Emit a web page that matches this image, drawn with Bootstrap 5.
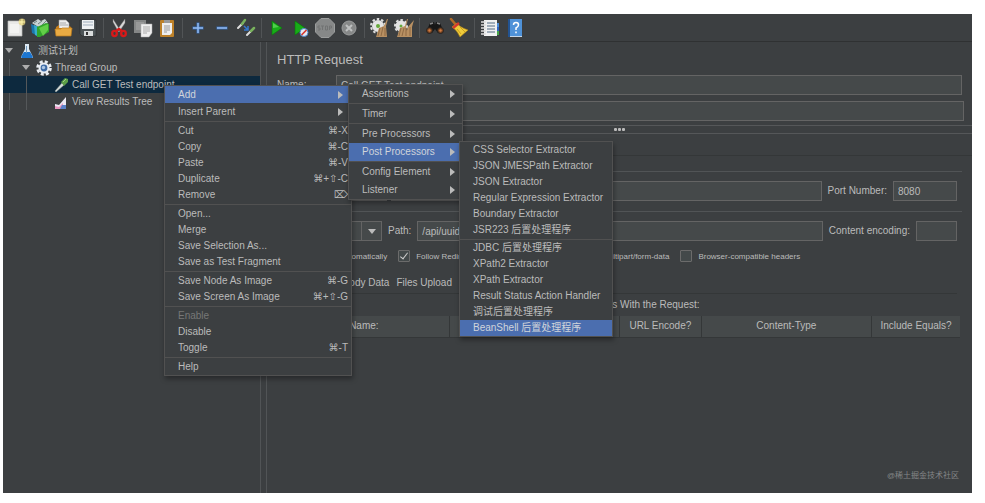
<!DOCTYPE html>
<html lang="zh-CN">
<head>
<meta charset="utf-8">
<meta name="viewport" content="width=device-width, initial-scale=1">
<title>Apache JMeter</title>
<link href="https://cdn.jsdelivr.net/npm/bootstrap@5.3.0/dist/css/bootstrap.min.css" rel="stylesheet">
<style>
body{background:#fff;color:#bbb;font:10px/16px "Liberation Sans","Noto Sans CJK SC","DejaVu Sans",sans-serif}
.jm-window{background:#3c3f41;margin:14px 13px 10px 3px;min-height:calc(100vh - 24px)}
.jm-toolbar{height:28px;padding-left:1px;border-bottom:1px solid #2f3132}
.tool{width:24px;height:26px;padding:0;border:0;background:none;display:flex;align-items:center;justify-content:center}
.tool svg{width:20px;height:20px;display:block}
.tool-sep{width:7px;height:20px;background:linear-gradient(#515456,#515456) center/1px 100% no-repeat}
.jm-tree{width:258px;border-right:1px solid #515456}
.tree-row{height:17px;line-height:17px;white-space:nowrap}
.tree-row svg{width:16px;height:16px;flex:none}
.tree-row span{margin-left:3px}
.caret-open{width:12px;flex:none;display:flex;justify-content:center}
.caret-open::before{content:"";border:4px solid transparent;border-top:5px solid #adadad;border-bottom:0}
.lvl2{padding-left:17px}
.lvl3{padding-left:50px}
.guides{background:linear-gradient(#55585a,#55585a) 6px 0/1px 100% no-repeat}
.guides .lvl3{background:linear-gradient(#55585a,#55585a) 23px 0/1px 100% no-repeat}
.guides .picked{background-color:#0d293e}
.split-bar{width:6px;border-right:1px solid #515456}
.panel-title{font-size:13px;line-height:16px;padding:10px 10px 0;margin:0 0 7px}
.side{padding-left:10px;margin-right:10px}
.side-second{margin:6px 8px 0 0}
.lab{width:59px}
.field{height:20px;min-width:0;background:#45494a;border:1px solid #646464;color:#bbb;padding:0 4px;font-size:10px;line-height:16px;border-radius:0}
.w-proto{width:64px}.w-port{width:64px}.w-enc{width:41px}
.split-h{height:9px;border-top:1px solid #555759;border-bottom:1px solid #555759;gap:1px}
.split-h i{width:3px;height:3px;background:#bbb;border-radius:1px}
.tabs-top{height:22px;padding-left:10px;border-bottom:1px solid #343738}
.tab-link{border:0;background:none;color:#bbb;padding:0;line-height:16px}
.group{margin:0 10px 0 9px;padding:9px 5px 0 0;border-top:1px solid #515456}
.group-gap{padding-bottom:10px}
.field-label{margin:0 6px}
.group-name{height:15px;line-height:15px;padding-left:9px}
.method{width:82px;appearance:none;background:#45494a linear-gradient(#646464,#646464) right 19px top/1px 100% no-repeat}
.method-wrap{position:relative}
.method-wrap::after{content:"";position:absolute;right:6px;top:8px;border:4px solid transparent;border-top:5px solid #bbb;border-bottom:0;pointer-events:none}
.opts{height:13px;margin-top:9px;padding-left:14px;font-size:8px;line-height:13px;gap:11px;white-space:nowrap}
.opts label{display:flex;gap:6px}
.tick{appearance:none;width:12px;height:12px;margin:0;background:#43494a;border:1px solid #6b6b6b;border-radius:1px;display:grid;place-items:center}
.tick:checked::before{content:"";width:4px;height:8px;margin-top:-2px;border:solid #ccc;border-width:0 1px 1px 0;transform:rotate(38deg)}
.tabs-sub{height:21px;margin:10px 0 0;border-bottom:1px solid #343738;gap:7px;padding-left:8px}
.args-title{height:22px;line-height:21px}
.args{width:calc(100% - 24px);margin-left:12px;table-layout:fixed;border-collapse:collapse}
.args th{height:21px;background:#45494a;border-right:1px solid #343738;border-bottom:1px solid #343738;font-weight:400;text-align:center;padding:0}
.args th:last-child{border-right:0}
.c-wide{width:25%}.c-url{width:12%}.c-inc{width:13%}
.popup{position:absolute;background:#3c3f41;border:1px solid #515151;box-shadow:1px 3px 5px rgba(0,0,0,.35)}
.popup button{display:flex;align-items:center;width:100%;height:16px;border:0;background:none;color:#bbb;padding:0 3px 0 13px;text-align:left;line-height:16px;white-space:nowrap}
.popup kbd{margin-left:auto;padding:0;background:none;color:#bbb;font:10px/16px "Liberation Sans","DejaVu Sans",sans-serif}
.popup hr{margin:1px 0;border:0;border-top:1px solid #515151;opacity:1}
.popup .chosen{background:#4b6eaf;color:#d0d4da}
.popup .more::after{content:"";margin-left:auto;margin-right:4px;border:4px solid transparent;border-left:5px solid #bbb;border-right:0}
.popup :disabled{color:#777}
.pop-context{left:161px;top:71px;width:188px}
.pop-context .more{height:17px}
.pop-context .more::after{margin-right:5px}
.pop-add{left:345px;top:70px;width:115px}
.pop-add button{height:18px}
.pop-add hr{margin:0 0 1px}
.pop-post{left:456px;top:127px;width:154px}
.pop-post hr{margin:1px 0 0}
.credit{position:absolute;right:13px;bottom:9px;font-size:8px;color:#858788}
</style>
<script src="https://cdn.jsdelivr.net/npm/bootstrap@5.3.0/dist/js/bootstrap.bundle.min.js"></script>
</head>
<body>
<div class="jm-window position-relative d-flex flex-column">
 <div class="jm-toolbar d-flex align-items-center" role="toolbar" aria-label="Toolbar">
  <button class="tool" aria-label="New"><svg viewBox="0 0 20 20"><path d="M2 3h14v15H2z" fill="#e9e9e7" stroke="#bcbcba" stroke-width=".7"/><path d="M4 6h9v9H4z" fill="#f3f3f1"/><circle cx="16" cy="4" r="3.4" fill="#e8d479" opacity=".75"/><path d="M16 1v6M13 4h6" stroke="#fff6ad"/></svg></button>
  <button class="tool" aria-label="Templates"><svg viewBox="0 0 20 20"><path d="M2 5l6-4 3 2 4-2 3 4-8 5z" fill="#c9d4d3"/><path d="M4 5l3-2m1 3 4-3m0 4 4-4" stroke="#71807f"/><path d="M1 6l5 2v9l-4-2z" fill="#1a77ad"/><path d="M4 7l5 2v10l-4-2z" fill="#39aecb"/><path d="M7 9l9-4 3 1v8l-9 5H7z" fill="#31a42b"/><path d="M9 10l9-4v6l-5 6z" fill="#62cf48"/></svg></button>
  <button class="tool" aria-label="Open"><svg viewBox="0 0 20 20"><path d="M5 2h7l3 3v7H5z" fill="#eee" stroke="#999" stroke-width=".6"/><path d="M6 5h6M6 7h8" stroke="#aaa"/><path d="M2 9l3-2v3h10V8l2 1v8H2z" fill="#c57d1c"/><path d="M1 11h6l1-1h10l-1 8H2z" fill="#eaab43" stroke="#bf7c1b" stroke-width=".7"/></svg></button>
  <button class="tool" aria-label="Save"><svg viewBox="0 0 20 20"><path d="M2 2h16v16H4l-2-2z" fill="#4e5558" stroke="#262a2c" stroke-width=".6"/><path d="M4 2h12v9H4z" fill="#eef1f3"/><path d="M5 4h10M5 7h10" stroke="#9faebd"/><path d="M6 13h9v5H6z" fill="#d9dcdd"/><path d="M8 14h2v3H8z" fill="#333"/></svg></button>
  <span class="tool-sep"></span>
  <button class="tool" aria-label="Cut"><svg viewBox="0 0 20 20"><path d="M4 1l7 11-2 1L4 4zM16 1L8 12l2 2 6-9z" fill="#d8d8d8" stroke="#777" stroke-width=".4"/><g fill="none" stroke="#d81919" stroke-width="2.3"><ellipse cx="5.5" cy="15.5" rx="2.3" ry="2.6"/><ellipse cx="14.5" cy="15.5" rx="2.3" ry="2.6"/><path d="M7 13l3-2 3 2"/></g></svg></button>
  <button class="tool" aria-label="Copy"><svg viewBox="0 0 20 20"><path d="M1 2h12v13H1z" fill="#858787"/><path d="M3 5h8M3 7h6M3 9h5M3 11h5" stroke="#aaa"/><path d="M8 6h11v9l-3 4H8z" fill="#eee" stroke="#aaa" stroke-width=".5"/><path d="M10 9h7M10 11h7M10 13h7M10 15h4" stroke="#aaa"/></svg></button>
  <button class="tool" aria-label="Paste"><svg viewBox="0 0 20 20"><rect x="3" y="2" width="14" height="17" rx="1" fill="#bd8129"/><path d="M5 5h10v10l-2 2H5z" fill="#eee"/><path d="M7 2h6v3H7z" fill="#999"/><path d="M7 8h6M7 10h6M7 12h6M7 14h3" stroke="#999"/></svg></button>
  <span class="tool-sep"></span>
  <button class="tool" aria-label="Expand All"><svg viewBox="0 0 20 20"><path d="M10 4.500v11M4.500 10h11" stroke="#3568ad" stroke-width="3"/><path d="M10 5v10M5 10h10" stroke="#94baf0" stroke-width="1.500"/></svg></button>
  <button class="tool" aria-label="Collapse All"><svg viewBox="0 0 20 20"><path d="M4.500 10h11" stroke="#3568ad" stroke-width="3"/><path d="M5 10h10" stroke="#94baf0" stroke-width="1.500"/></svg></button>
  <button class="tool" aria-label="Toggle"><svg viewBox="0 0 20 20"><g stroke-linecap="round"><path d="M2 10l5-5M11 17l4-4" stroke="#ddd" stroke-width="2"/><path d="M6 6l3-4M15 13l3-3" stroke="#79b25d" stroke-width="2.500"/></g><path d="M8 8l4 4m0-4v4H8" fill="none" stroke="#3478ce" stroke-width="1.500"/></svg></button>
  <span class="tool-sep"></span>
  <button class="tool" aria-label="Start"><svg viewBox="0 0 20 20"><path d="M5 3l10 7L5 17z" fill="#18ac18" stroke="#087808" stroke-width=".6"/><path d="M6 5l6 4-6 1z" fill="#50ce4d"/></svg></button>
  <button class="tool" aria-label="Start no pauses"><svg viewBox="0 0 20 20"><path d="M4 3l10 7-10 7z" fill="#18ac18" stroke="#087808" stroke-width=".6"/><circle cx="13" cy="14.500" r="4" fill="#e7e9f0" stroke="#4c86ce"/><path d="M10.500 17l5-5" stroke="#d43931" stroke-width="1.700"/></svg></button>
  <button class="tool" aria-label="Stop"><svg viewBox="0 0 20 20"><path d="M6 .5h8L19.500 6v8L14 19.500H6L.5 14V6z" fill="#868888" stroke="#9b9d9d"/><g fill="none" stroke="#717373"><path d="M5 8H3v2h2v2H3M6 8h3M7.500 8v4M10.500 8h2v4h-2zM14.500 12V8h2v2h-2"/></g></svg></button>
  <button class="tool" aria-label="Shutdown"><svg viewBox="0 0 20 20"><circle cx="10" cy="10" r="7" fill="#868888" stroke="#9b9d9d"/><path d="M7 7l6 6m0-6l-6 6" stroke="#bec0c0" stroke-width="2"/></svg></button>
  <span class="tool-sep"></span>
  <button class="tool" aria-label="Clear"><svg viewBox="0 0 20 20"><circle cx="8" cy="8" r="4" fill="#65a93c" stroke="#e4e4e4" stroke-width="4"/><circle cx="8" cy="8" r="7" fill="none" stroke="#ddd" stroke-width="2" stroke-dasharray="2.500 2"/><path d="M18 1l-2 7 1 11H6l3-9 5-2 3-7z" fill="#b89062"/><path d="M10 10l-2 8M13 9l-2 9m4-8v8" stroke="#7d5a38" stroke-width=".7"/></svg></button>
  <button class="tool" aria-label="Clear All"><svg viewBox="0 0 20 20"><circle cx="7" cy="8" r="3.500" fill="#65a93c" stroke="#e4e4e4" stroke-width="4"/><circle cx="7" cy="8" r="6" fill="none" stroke="#ddd" stroke-width="2" stroke-dasharray="2.500 2"/><path d="M14 1l-2 7 2 11H3l3-9 5-2 2-7zM20 2l-2 7v10h-7l3-10z" fill="#b89062"/><path d="M7 10l-2 8m5-8-2 8m4-8v8m4-9v9" stroke="#7d5a38" stroke-width=".7"/></svg></button>
  <span class="tool-sep"></span>
  <button class="tool" aria-label="Search"><svg viewBox="0 0 20 20"><path d="M5 5l4-1 1 3 1-3 4 1 3 7-5 3-3-4-3 4-5-3z" fill="#171717"/><path d="M5 6l3-1m4 0 3 1" stroke="#888" stroke-width="1.500"/><circle cx="4.500" cy="12.500" r="3" fill="#784421" stroke="#222"/><circle cx="15.500" cy="12.500" r="3" fill="#784421" stroke="#222"/><circle cx="4.500" cy="12.500" r="1.200" fill="#d27b43"/><circle cx="15.500" cy="12.500" r="1.200" fill="#d27b43"/></svg></button>
  <button class="tool" aria-label="Reset Search"><svg viewBox="0 0 20 20"><path d="M2 1l5 6" stroke="#b06a28" stroke-width="2.500" stroke-linecap="round"/><path d="M8 5q2 4 11 7l-8 7Q8 12 3 9z" fill="#efcb3a" stroke="#b88c13" stroke-width=".6"/><path d="M4 10l6-5" stroke="#d4382c" stroke-width="2.500"/><path d="M8 11l4 5m-1-7 5 5" stroke="#c29318" stroke-width=".8"/></svg></button>
  <span class="tool-sep"></span>
  <button class="tool" aria-label="Function Helper"><svg viewBox="0 0 20 20"><path d="M16 5h3v4h-3z" fill="#4b8cd8"/><path d="M16 9h3v4h-3z" fill="#2f63c0"/><path d="M16 13h3v4h-3z" fill="#45a54a"/><path d="M4 2h13v16H4z" fill="#f0f1f2"/><path d="M7 5h8M7 8h8M7 11h8M7 14h8" stroke="#536a83"/><path d="M1 4h5M1 7h5M1 10h5M1 13h5M1 16h5" stroke="#ddd" stroke-width="1.500"/></svg></button>
  <button class="tool" aria-label="Help"><svg viewBox="0 0 20 20"><path d="M4 1h14v18H4z" fill="#4f92d8"/><path d="M4 1h2v18H4z" fill="#225391"/><path d="M6 18h12v1H6z" fill="#c6d6e7"/><path d="M9.500 7q0-2.500 2.500-2.500t2.500 2.500q0 1.500-2.500 3v2M12 13.500v1.700" fill="none" stroke="#fff" stroke-width="1.500"/></svg></button>
 </div>

 <div class="d-flex flex-grow-1">
  <nav class="jm-tree flex-shrink-0" aria-label="Test plan">
   <div class="tree-row d-flex align-items-center"><i class="caret-open"></i><svg viewBox="0 0 16 16" class="ms-1"><path d="M6 1h4v5l4 8q0 1-1 1H3q-1 0-1-1l4-8z" fill="#dce8f2"/><path d="M5 9h6l3 5-1 1H3l-1-1z" fill="#1c76d1"/><path d="M7 3h1v7H7z" fill="#7199bc"/></svg><span>测试计划</span></div>
   <div class="guides">
    <div class="tree-row lvl2 d-flex align-items-center"><i class="caret-open"></i><svg viewBox="0 0 16 16" class="ms-1"><circle cx="8" cy="8" r="6.500" fill="none" stroke="#e9edf2" stroke-width="2.600" stroke-dasharray="3 2.100"/><circle cx="8" cy="8" r="5.500" fill="#e9edf2"/><circle cx="8" cy="8" r="3.400" fill="#3e6ba6"/><circle cx="7.500" cy="7.500" r="1.700" fill="#aec8e5"/></svg><span>Thread Group</span></div>
    <div class="tree-row lvl3 picked d-flex align-items-center"><svg viewBox="0 0 16 16"><path d="M2 14l7-8 2 2-8 7z" fill="#d7dedb" stroke="#8e9997" stroke-width=".5"/><path d="M8 5l4-4 3 1v3l-4 4z" fill="#5c9e48"/><path d="M10 5l3-3" stroke="#9cce80"/></svg><span>Call GET Test endpoint</span></div>
    <div class="tree-row lvl3 d-flex align-items-center"><svg viewBox="0 0 16 16"><path d="M2 10l4 1 7-8v12H2z" fill="#eceaf5"/><path d="M2 12l4 1 4-4v6H2z" fill="#e996c1"/><path d="M9 11h4v4H7z" fill="#5c82ca"/></svg><span>View Results Tree</span></div>
   </div>
  </nav>
  <div class="split-bar flex-shrink-0"></div>
  <main class="flex-grow-1">
   <h1 class="panel-title">HTTP Request</h1>
   <div class="side d-flex align-items-center"><label class="lab" for="nm">Name:</label><input id="nm" class="field flex-grow-1" value="Call GET Test endpoint"></div>
   <div class="side side-second d-flex align-items-center"><label class="lab" for="cm">Comments:</label><input id="cm" class="field flex-grow-1"></div>
   <div class="split-h mt-1 d-flex align-items-center justify-content-center"><i></i><i></i><i></i></div>
   <div class="tabs-top d-flex align-items-center"><button class="tab-link">Basic</button></div>
   <div class="group-name">Web Server</div>
   <div class="group group-gap"><div class="d-flex align-items-center">
     <label for="pr" class="me-2">Protocol:</label><input id="pr" class="field w-proto me-1">
     <input class="field flex-grow-1" aria-label="Server Name or IP"><label for="po" class="field-label">Port Number:</label><input id="po" class="field w-port" value="8080"></div></div>
   <div class="group">
    <div class="d-flex align-items-center">
     <span class="method-wrap ms-4"><select class="field method" aria-label="Method"><option>GET</option></select></span>
     <label for="pa" class="field-label">Path:</label><input id="pa" class="field flex-grow-1" value="/api/uuid"><label for="en" class="field-label">Content encoding:</label><input id="en" class="field w-enc">
    </div>
    <div class="opts d-flex">
     <label><input type="checkbox" class="tick">Redirect Automatically</label>
     <label><input type="checkbox" class="tick" checked>Follow Redirects</label>
     <label><input type="checkbox" class="tick" checked>Use KeepAlive</label>
     <label><input type="checkbox" class="tick">Use multipart/form-data</label>
     <label><input type="checkbox" class="tick">Browser-compatible headers</label>
    </div>
    <div class="tabs-sub d-flex align-items-center"><button class="tab-link">Parameters</button><button class="tab-link">Body Data</button><button class="tab-link">Files Upload</button></div>
   </div>
   <div class="args-title text-center">Send Parameters With the Request:</div>
   <table class="args"><thead><tr><th class="c-wide">Name:</th><th class="c-wide">Value</th><th class="c-url">URL Encode?</th><th class="c-wide">Content-Type</th><th class="c-inc">Include Equals?</th></tr></thead></table>
  </main>
 </div>

 <div class="popup pop-context">
  <button class="more chosen">Add</button><button class="more">Insert Parent</button><hr>
  <button>Cut<kbd>⌘-X</kbd></button><button>Copy<kbd>⌘-C</kbd></button><button>Paste<kbd>⌘-V</kbd></button><button>Duplicate<kbd>⌘+⇧-C</kbd></button><button>Remove<kbd>⌦</kbd></button><hr>
  <button>Open...</button><button>Merge</button><button>Save Selection As...</button><button>Save as Test Fragment</button><hr>
  <button>Save Node As Image<kbd>⌘-G</kbd></button><button>Save Screen As Image<kbd>⌘+⇧-G</kbd></button><hr>
  <button disabled>Enable</button><button>Disable</button><button>Toggle<kbd>⌘-T</kbd></button><hr>
  <button>Help</button>
 </div>
 <div class="popup pop-add">
  <button class="more">Assertions</button><hr><button class="more">Timer</button><hr>
  <button class="more">Pre Processors</button><button class="more chosen">Post Processors</button><hr>
  <button class="more">Config Element</button><button class="more">Listener</button>
 </div>
 <div class="popup pop-post">
  <button>CSS Selector Extractor</button><button>JSON JMESPath Extractor</button><button>JSON Extractor</button><button>Regular Expression Extractor</button><button>Boundary Extractor</button><button>JSR223 后置处理程序</button><hr>
  <button>JDBC 后置处理程序</button><button>XPath2 Extractor</button><button>XPath Extractor</button><button>Result Status Action Handler</button><button>调试后置处理程序</button><button class="chosen">BeanShell 后置处理程序</button>
 </div>
 <div class="credit">@稀土掘金技术社区</div>
</div>
</body>
</html>
